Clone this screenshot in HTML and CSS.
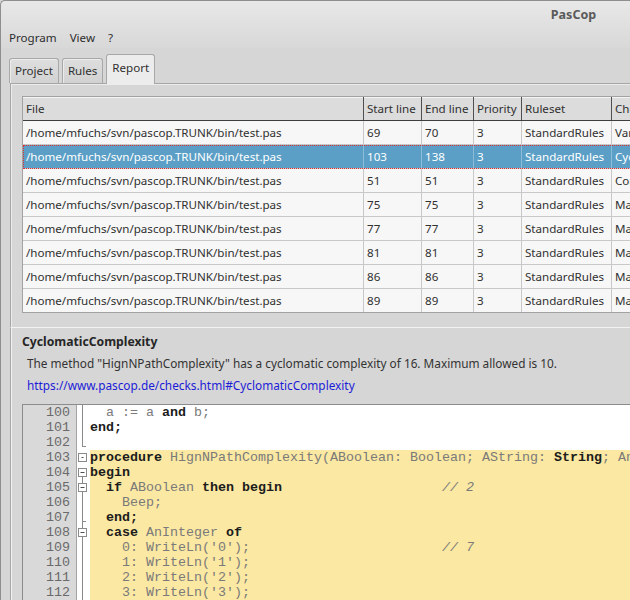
FILE: index.html
```html
<!DOCTYPE html>
<html>
<head>
<meta charset="utf-8">
<title>PasCop</title>
<link rel="stylesheet" href="styles.css">
</head>
<body>
<div class="window">
  <div class="chrome">
    <div class="titlebar">PasCop</div>
    <div class="menubar"><span>Program</span><span>View</span><span>?</span></div>
  </div>
  <div class="tabs">
    <div class="tab">Project</div>
    <div class="tab">Rules</div>
    <div class="tab active">Report</div>
  </div>
  <div class="pane">
    <div class="grid">
      <div class="row head">
        <div class="c file">File</div><div class="c start">Start line</div><div class="c end">End line</div><div class="c prio">Priority</div><div class="c rules">Ruleset</div><div class="c check">Check</div>
      </div>
      <div class="row">
        <div class="c file">/home/mfuchs/svn/pascop.TRUNK/bin/test.pas</div><div class="c start">69</div><div class="c end">70</div><div class="c prio">3</div><div class="c rules">StandardRules</div><div class="c check">VariableNaming</div>
      </div>
      <div class="row sel">
        <div class="c file">/home/mfuchs/svn/pascop.TRUNK/bin/test.pas</div><div class="c start">103</div><div class="c end">138</div><div class="c prio">3</div><div class="c rules">StandardRules</div><div class="c check">CyclomaticComplexity</div>
      </div>
      <div class="row">
        <div class="c file">/home/mfuchs/svn/pascop.TRUNK/bin/test.pas</div><div class="c start">51</div><div class="c end">51</div><div class="c prio">3</div><div class="c rules">StandardRules</div><div class="c check">ConstantNaming</div>
      </div>
      <div class="row">
        <div class="c file">/home/mfuchs/svn/pascop.TRUNK/bin/test.pas</div><div class="c start">75</div><div class="c end">75</div><div class="c prio">3</div><div class="c rules">StandardRules</div><div class="c check">MagicNumber</div>
      </div>
      <div class="row">
        <div class="c file">/home/mfuchs/svn/pascop.TRUNK/bin/test.pas</div><div class="c start">77</div><div class="c end">77</div><div class="c prio">3</div><div class="c rules">StandardRules</div><div class="c check">MagicNumber</div>
      </div>
      <div class="row">
        <div class="c file">/home/mfuchs/svn/pascop.TRUNK/bin/test.pas</div><div class="c start">81</div><div class="c end">81</div><div class="c prio">3</div><div class="c rules">StandardRules</div><div class="c check">MagicNumber</div>
      </div>
      <div class="row">
        <div class="c file">/home/mfuchs/svn/pascop.TRUNK/bin/test.pas</div><div class="c start">86</div><div class="c end">86</div><div class="c prio">3</div><div class="c rules">StandardRules</div><div class="c check">MagicNumber</div>
      </div>
      <div class="row">
        <div class="c file">/home/mfuchs/svn/pascop.TRUNK/bin/test.pas</div><div class="c start">89</div><div class="c end">89</div><div class="c prio">3</div><div class="c rules">StandardRules</div><div class="c check">MagicNumber</div>
      </div>
    </div>
  </div>
  <div class="details">
    <div class="check-name">CyclomaticComplexity</div>
    <div class="msg">The method "HignNPathComplexity" has a cyclomatic complexity of 16. Maximum allowed is 10.</div>
    <a class="link" href="#CyclomaticComplexity">https://www.pascop.de/checks.html#CyclomaticComplexity</a>
    <div class="editor">
      <div class="gutter">
        <div>100</div><div>101</div><div>102</div><div>103</div><div>104</div><div>105</div><div>106</div><div>107</div><div>108</div><div>109</div><div>110</div><div>111</div><div>112</div><div>113</div>
      </div>
      <svg class="folds" width="12" height="210" viewBox="0 0 12 210">
        <g stroke="#8a8a8a" fill="none" stroke-width="1">
          <line x1="5.5" y1="0" x2="5.5" y2="42"/>
          <line x1="5.5" y1="41.5" x2="9" y2="41.5"/>
          <line x1="5.5" y1="72" x2="5.5" y2="210"/>
          <line x1="5.5" y1="116.5" x2="9" y2="116.5"/>
          <rect x="1.5" y="48.5" width="8" height="8" fill="#fff"/>
          <rect x="1.5" y="63.5" width="8" height="8" fill="#fff"/>
          <rect x="1.5" y="78.5" width="8" height="8" fill="#fff"/>
          <rect x="1.5" y="123.5" width="8" height="8" fill="#fff"/>
        </g>
        <g stroke="#505050" stroke-width="1">
          <line x1="4.5" y1="52.5" x2="6.5" y2="52.5"/>
          <line x1="3.5" y1="67.5" x2="7.5" y2="67.5"/>
          <line x1="3.5" y1="82.5" x2="7.5" y2="82.5"/>
          <line x1="3.5" y1="127.5" x2="7.5" y2="127.5"/>
        </g>
      </svg>
      <div class="code">
        <div class="ln">  <span class="i">a :=</span> <span class="i">a</span> <b>and</b> <span class="i">b;</span></div>
        <div class="ln"><b>end;</b></div>
        <div class="ln"> </div>
        <div class="ln hl"><b>procedure</b> <span class="i">HignNPathComplexity(ABoolean: Boolean; AString:</span> <b>String</b><span class="i">; AnInteger:</span> <b>Integer</b><span class="i">);</span></div>
        <div class="ln hl"><b>begin</b></div>
        <div class="ln hl">  <b>if</b> <span class="i">ABoolean</span> <b>then begin</b>                    <span class="cm">// 2</span></div>
        <div class="ln hl">    <span class="i">Beep;</span></div>
        <div class="ln hl">  <b>end;</b></div>
        <div class="ln hl">  <b>case</b> <span class="i">AnInteger</span> <b>of</b></div>
        <div class="ln hl">    <span class="i">0: WriteLn('0');</span>                        <span class="cm">// 7</span></div>
        <div class="ln hl">    <span class="i">1: WriteLn('1');</span></div>
        <div class="ln hl">    <span class="i">2: WriteLn('2');</span></div>
        <div class="ln hl">    <span class="i">3: WriteLn('3');</span></div>
        <div class="ln hl">    <span class="i">4: WriteLn('4');</span></div>
      </div>
    </div>
  </div>
</div>
</body>
</html>
```

FILE: styles.css
```css
html, body {
  margin: 0;
  padding: 0;
}
body {
  width: 630px;
  height: 600px;
  overflow: hidden;
  background: #d6d6d6;
  font-family: "Noto Sans", "Open Sans", sans-serif;
  font-size: 11.6px;
  color: #303030;
}
.window {
  width: 1146px;
  height: 600px;
  box-sizing: border-box;
  border-left: 1px solid #8e8e8e;
  border-top: 1px solid #8e8e8e;
  border-top-left-radius: 5px;
  background: #d6d6d6;
  overflow: hidden;
}
.chrome {
  background: linear-gradient(#e8e8e8, #d8d8d8);
  border-top-left-radius: 5px;
}
.titlebar {
  height: 26px;
  line-height: 28px;
  text-align: center;
  font-weight: bold;
  color: #5a5a5a;
  font-size: 12.5px;
}
.menubar {
  height: 21px;
  line-height: 21px;
  display: flex;
  gap: 13px;
  padding-left: 8px;
  color: #2e2e2e;
}
.tabs {
  height: 35px;
  display: flex;
  align-items: flex-end;
  gap: 3px;
  padding-left: 8px;
  box-sizing: border-box;
  position: relative;
  z-index: 1;
}
.tab {
  height: 24px;
  line-height: 24px;
  padding: 0 5px;
  border: 1px solid #a8a8a8;
  border-bottom: none;
  border-radius: 3px 3px 0 0;
  background: linear-gradient(#dedede, #d2d2d2);
  color: #303030;
  box-shadow: inset 1px 1px 0 #ececec;
}
.tab.active {
  height: 29px;
  line-height: 26px;
  background: #ececec;
  margin-bottom: -1px;
  box-shadow: none;
}
.pane {
  margin-left: 9px;
  height: 244px;
  box-sizing: border-box;
  border-left: 1px solid #a6a6a6;
  border-top: 1px solid #a6a6a6;
  box-shadow: inset 1px 1px 0 #ececec;
  padding: 12px 0 0 11px;
}
.grid {
  border: 1px solid #a2a2a2;
  width: 800px;
  background: #f7f7f7;
}
.row {
  display: flex;
  height: 24px;
  border-bottom: 1px solid #c8c8c8;
  box-sizing: border-box;
}
.row:last-child {
  border-bottom: none;
  height: 23px;
}
.c {
  box-sizing: border-box;
  border-right: 1px solid #c8c8c8;
  padding-left: 3px;
  line-height: 23px;
  white-space: nowrap;
  overflow: hidden;
  flex: none;
}
.file { width: 341px; }
.start { width: 58px; }
.end { width: 52px; }
.prio { width: 48px; }
.rules { width: 90px; }
.check { width: 200px; border-right: none; }
.row.head {
  background: #dcdcdc;
  border-bottom: 1px solid #3e3e3e;
  box-shadow: inset 0 1px 0 #f4f4f4;
}
.row.head .c {
  border-right-color: #505050;
}
.row.head .check { border-right: none; }
.row.sel {
  background: #5c9fc6;
  color: #ffffff;
  outline: 1px dotted #e03030;
  outline-offset: -1px;
}
.row.sel .c {
  border-right-color: #8cbcd8;
}
.details {
  margin-left: 9px;
  height: 400px;
  box-sizing: border-box;
  border-left: 1px solid #a6a6a6;
  border-top: 1px solid #f2f2f2;
  box-shadow: inset 1px 0 0 #f2f2f2;
  padding: 4px 0 0 11px;
}
.check-name {
  font-weight: bold;
  line-height: 20px;
  font-size: 12.2px;
  color: #262626;
}
.msg {
  line-height: 22px;
  padding-left: 5px;
  color: #333;
  font-size: 11.8px;
}
.link {
  display: block;
  padding-left: 5px;
  line-height: 22px;
  color: #1c1cd8;
  text-decoration: none;
  font-size: 11.8px;
}
.editor {
  margin-top: 8px;
  display: flex;
  border-top: 1px solid #8c8c8c;
  border-left: 1px solid #8c8c8c;
  font-family: "Liberation Mono", "Courier New", monospace;
  font-size: 13.333px;
  background: #ffffff;
}
.gutter {
  width: 54px;
  box-sizing: border-box;
  padding-right: 6px;
  text-align: right;
  background: #d9d9d9;
  border-right: 1px solid #a4a4a4;
  color: #6a6a6a;
  flex: none;
}
.gutter div, .ln {
  height: 15px;
  line-height: 15px;
}
.folds {
  flex: none;
  display: block;
  background: #ffffff;
}
.code {
  flex: 1;
  padding-left: 1px;
  color: #7a7a7a;
}
.ln {
  white-space: pre;
}
.ln b {
  color: #1c1c1c;
  font-weight: bold;
}
.ln .i {
  color: #7a7a7a;
}
.ln .cm {
  font-style: italic;
  color: #7a7a7a;
}
.ln.hl {
  background: #fbe8a2;
}
```
